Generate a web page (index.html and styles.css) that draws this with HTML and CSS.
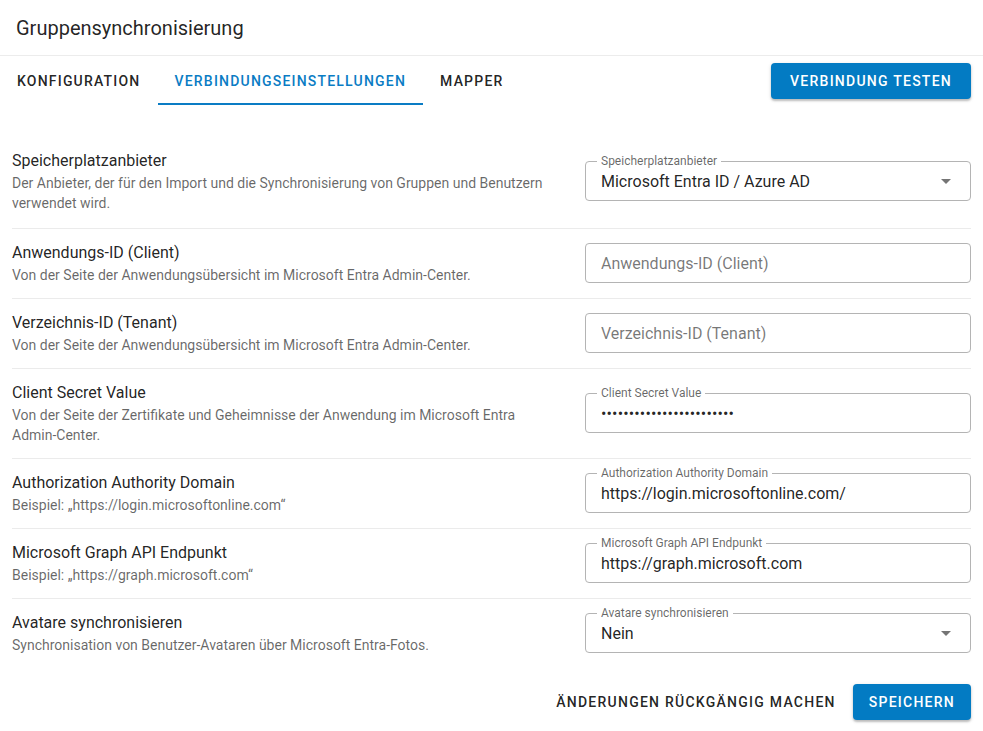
FILE: index.html
```html
<!DOCTYPE html>
<html lang="de">
<head>
<meta charset="UTF-8" />
<meta name="viewport" content="width=device-width, initial-scale=1.0" />
<title>Gruppensynchronisierung</title>
<link rel="stylesheet" href="styles.css">
</head>
<body>
<div class="header">Gruppensynchronisierung</div>

<div class="tabbar">
  <div class="tabs">
    <div class="tab">Konfiguration</div>
    <div class="tab active">Verbindungseinstellungen</div>
    <div class="tab">Mapper</div>
  </div>
  <button class="btn primary">Verbindung testen</button>
</div>

<div class="content">
  <div class="row first">
    <div class="info">
      <div class="title">Speicherplatzanbieter</div>
      <div class="desc">Der Anbieter, der für den Import und die Synchronisierung von Gruppen und Benutzern verwendet wird.</div>
    </div>
    <div class="field">
      <span class="float">Speicherplatzanbieter</span>
      <div class="value">Microsoft Entra ID / Azure AD</div>
      <svg class="arrow" viewBox="0 0 24 24" width="24" height="24"><path d="M7 10l5 5 5-5z"/></svg>
    </div>
  </div>

  <div class="row">
    <div class="info">
      <div class="title">Anwendungs-ID (Client)</div>
      <div class="desc">Von der Seite der Anwendungsübersicht im Microsoft Entra Admin-Center.</div>
    </div>
    <div class="field">
      <input type="text" placeholder="Anwendungs-ID (Client)" />
    </div>
  </div>

  <div class="row">
    <div class="info">
      <div class="title">Verzeichnis-ID (Tenant)</div>
      <div class="desc">Von der Seite der Anwendungsübersicht im Microsoft Entra Admin-Center.</div>
    </div>
    <div class="field">
      <input type="text" placeholder="Verzeichnis-ID (Tenant)" />
    </div>
  </div>

  <div class="row">
    <div class="info">
      <div class="title">Client Secret Value</div>
      <div class="desc">Von der Seite der Zertifikate und Geheimnisse der Anwendung im Microsoft Entra Admin-Center.</div>
    </div>
    <div class="field">
      <span class="float">Client Secret Value</span>
      <input class="secret" type="password" value="abcdefghijklmnopqrstuvwx" />
    </div>
  </div>

  <div class="row">
    <div class="info">
      <div class="title">Authorization Authority Domain</div>
      <div class="desc">Beispiel: „https://login.microsoftonline.com“</div>
    </div>
    <div class="field">
      <span class="float">Authorization Authority Domain</span>
      <input type="text" value="https://login.microsoftonline.com/" />
    </div>
  </div>

  <div class="row">
    <div class="info">
      <div class="title">Microsoft Graph API Endpunkt</div>
      <div class="desc">Beispiel: „https://graph.microsoft.com“</div>
    </div>
    <div class="field">
      <span class="float">Microsoft Graph API Endpunkt</span>
      <input type="text" value="https://graph.microsoft.com" />
    </div>
  </div>

  <div class="row">
    <div class="info">
      <div class="title">Avatare synchronisieren</div>
      <div class="desc">Synchronisation von Benutzer-Avataren über Microsoft Entra-Fotos.</div>
    </div>
    <div class="field">
      <span class="float">Avatare synchronisieren</span>
      <div class="value">Nein</div>
      <svg class="arrow" viewBox="0 0 24 24" width="24" height="24"><path d="M7 10l5 5 5-5z"/></svg>
    </div>
  </div>
</div>

<div class="actions">
  <button class="btn text">Änderungen rückgängig machen</button>
  <button class="btn primary">Speichern</button>
</div>
</body>
</html>
```

FILE: styles.css
```css
body {
  margin: 0;
  background: #fff;
  font-family: Roboto, "Noto Sans", sans-serif;
  color: rgba(0, 0, 0, 0.87);
}

.header {
  height: 56px;
  padding: 0 16px;
  display: flex;
  align-items: center;
  font-size: 20px;
  border-bottom: 1px solid #ececec;
  box-sizing: border-box;
}

.tabbar {
  display: flex;
  justify-content: space-between;
  align-items: center;
  padding-right: 12px;
}

.tabs {
  display: flex;
}

.tab {
  height: 49px;
  padding: 3px 17px 0;
  display: flex;
  align-items: center;
  font-size: 14px;
  font-weight: 500;
  letter-spacing: 1.2px;
  text-transform: uppercase;
  box-sizing: border-box;
  border-bottom: 2px solid transparent;
}

.tab.active {
  color: #0a7cc4;
  border-bottom-color: #0a7cc4;
}

.btn {
  height: 36px;
  border: none;
  border-radius: 4px;
  padding: 0 16px;
  font-family: inherit;
  font-size: 14px;
  font-weight: 500;
  letter-spacing: 1.25px;
  text-transform: uppercase;
  background: none;
  color: rgba(0, 0, 0, 0.87);
}

.btn.text {
  padding: 0 8px;
}

.btn.primary {
  background: #037bc3;
  color: #fff;
  box-shadow: 0 2px 2px rgba(0, 0, 0, 0.2), 0 1px 4px rgba(0, 0, 0, 0.12);
}

.tabbar .btn.primary {
  padding: 0 19px;
  margin-top: 1px;
}

.content {
  padding: 33px 12px 0;
}

.row {
  display: flex;
  align-items: center;
  gap: 20px;
  padding: 12px 0 13px;
  border-bottom: 1px solid #ebebeb;
}

.row.first {
  padding: 11px 0 15px;
}

.row:last-child {
  border-bottom: none;
}

.info {
  flex: 1;
  max-width: 540px;
  margin-right: auto;
}

.title {
  font-size: 16px;
  line-height: 24px;
}

.desc {
  font-size: 14px;
  line-height: 20px;
  color: rgba(0, 0, 0, 0.6);
}

.field {
  position: relative;
  width: 386px;
  height: 40px;
  flex: none;
  border: 1px solid #b4b4b4;
  border-radius: 4px;
  box-sizing: border-box;
  display: flex;
  align-items: center;
  padding: 0 15px;
}

/* label sitting in the outline */
.float {
  position: absolute;
  left: 11px;
  top: -8px;
  padding: 0 4px;
  background: #fff;
  font-size: 12px;
  line-height: 14px;
  color: rgba(0, 0, 0, 0.6);
}

.field input,
.field .value {
  flex: 1;
  border: none;
  outline: none;
  padding: 0;
  font-family: inherit;
  font-size: 16px;
  color: rgba(0, 0, 0, 0.87);
  background: transparent;
}

.field input.secret {
  letter-spacing: 0.15px;
}

.field input::placeholder {
  color: rgba(0, 0, 0, 0.54);
}

.arrow {
  position: absolute;
  right: 12px;
  top: 7px;
  fill: rgba(0, 0, 0, 0.54);
}

.actions {
  display: flex;
  justify-content: flex-end;
  gap: 9px;
  padding: 16px 12px;
}
```
